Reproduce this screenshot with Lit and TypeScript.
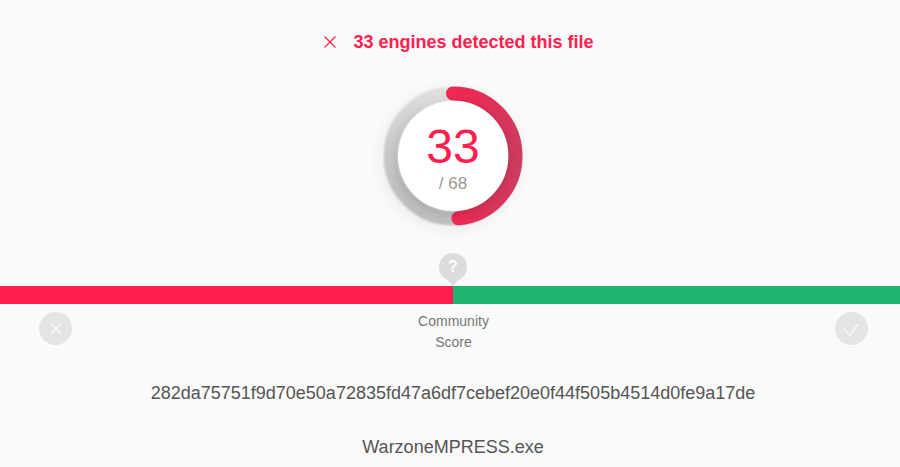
import { LitElement, html, css } from 'lit';
import { customElement, property } from 'lit/decorators.js';

const RADIUS = 62.5;
const CIRCUMFERENCE = 2 * Math.PI * RADIUS;

@customElement('app-root')
export class AppRoot extends LitElement {
	@property({ type: Number }) positives = 33;
	@property({ type: Number }) total = 68;

	static styles = css`
		:host {
			display: block;
			height: 467px;
			overflow: hidden;
			background: #fafafa;
			font-family: "Liberation Sans", Arial, sans-serif;
		}
		.page {
			display: flex;
			flex-direction: column;
			align-items: center;
			padding: 31px 0 0 6px;
		}
		.headline {
			display: flex;
			align-items: center;
			gap: 16px;
			height: 22px;
			margin-left: 11px;
			color: #ff2050;
			font-size: 18px;
			font-weight: 700;
		}
		.headline svg {
			display: block;
		}
		.gauge {
			position: relative;
			width: 140px;
			height: 140px;
			margin-top: 33px;
			border-radius: 50%;
			box-shadow: -2px 3px 16px rgba(0, 0, 0, 0.06);
		}
		.gauge svg {
			display: block;
		}
		.gauge-face {
			position: absolute;
			left: 15px;
			top: 15px;
			width: 110px;
			height: 110px;
			border-radius: 50%;
			background: #fff;
			box-shadow: -1px 2px 8px rgba(0, 0, 0, 0.2);
			display: flex;
			flex-direction: column;
			align-items: center;
		}
		.positives {
			margin-top: 18px;
			color: #ff2050;
			font-size: 48px;
			line-height: 55px;
		}
		.total {
			color: #9a9a9a;
			font-size: 17px;
			line-height: 20px;
		}
		.score {
			position: relative;
			align-self: stretch;
			margin: 60px 0 0 -6px;
		}
		.bar {
			display: grid;
			grid-template-columns: 453px 1fr;
			height: 18px;
		}
		.bar-bad {
			background: #ff2050;
		}
		.bar-good {
			background: #21b56f;
		}
		.pin {
			position: absolute;
			left: 439px;
			top: -33px;
		}
		.pin span {
			position: absolute;
			left: 0;
			top: 0;
			width: 28px;
			height: 28px;
			line-height: 28px;
			text-align: center;
			color: #fff;
			font-size: 16px;
			font-weight: 700;
		}
		.votes {
			display: flex;
			justify-content: space-between;
			align-items: flex-start;
			padding: 7px 32px 0 39px;
		}
		.vote {
			width: 33px;
			height: 33px;
			margin-top: 1px;
			border-radius: 50%;
			background: #e4e4e4;
			display: flex;
			align-items: center;
			justify-content: center;
		}
		.community {
			color: #767676;
			font-size: 14px;
			line-height: 21px;
			text-align: center;
		}
		.hash {
			margin-top: 28px;
			color: #555;
			font-size: 18px;
			line-height: 24px;
		}
		.filename {
			margin-top: 30px;
			color: #555;
			font-size: 18px;
			line-height: 24px;
		}
	`;

	render() {
		const filled = (this.positives / this.total) * CIRCUMFERENCE;
		return html`
			<div class="page">
				<div class="headline">
					<svg width="14" height="14" viewBox="0 0 14 14" fill="none" stroke="#ff2050" stroke-width="1.2">
						<path d="M1.5 1.5l11 11M12.5 1.5l-11 11" />
					</svg>
					<span>${this.positives} engines detected this file</span>
				</div>

				<div class="gauge">
					<svg width="140" height="140" viewBox="0 0 140 140" fill="none">
						<defs>
							<linearGradient id="track" x1="0.75" y1="0" x2="0.25" y2="1">
								<stop offset="0" stop-color="#e4e4e4" />
								<stop offset="1" stop-color="#bcbcbc" />
							</linearGradient>
							<linearGradient id="arc" gradientUnits="userSpaceOnUse" x1="70" y1="5" x2="60" y2="135">
								<stop offset="0" stop-color="#ff2050" />
								<stop offset="0.6" stop-color="#ea2a54" />
								<stop offset="1" stop-color="#cc3c5e" />
							</linearGradient>
							<filter id="soft" x="-10%" y="-10%" width="120%" height="120%">
								<feGaussianBlur stdDeviation="1" />
							</filter>
						</defs>
						<circle cx="70" cy="70" r="${RADIUS}" stroke="url(#track)" stroke-width="14" filter="url(#soft)" />
						<circle
							cx="70"
							cy="70"
							r="${RADIUS}"
							stroke="url(#arc)"
							stroke-width="14"
							stroke-linecap="round"
							stroke-dasharray="${filled} ${CIRCUMFERENCE}"
							transform="rotate(-90 70 70)"
						/>
					</svg>
					<div class="gauge-face">
						<div class="positives">${this.positives}</div>
						<div class="total">/ ${this.total}</div>
					</div>
				</div>

				<div class="score">
					<div class="bar">
						<div class="bar-bad"></div>
						<div class="bar-good"></div>
					</div>
					<div class="pin">
						<svg width="28" height="33" viewBox="0 0 28 33">
							<path fill="#dcdcdc" d="M14 0a14 14 0 0 1 5 27.1L14 33l-5-5.9A14 14 0 0 1 14 0z" />
						</svg>
						<span>?</span>
					</div>
					<div class="votes">
						<div class="vote">
							<svg width="16" height="16" viewBox="0 0 16 16" fill="none" stroke="#fbfbfb" stroke-width="1.2">
								<path d="M2.5 2.5l11 11M13.5 2.5l-11 11" />
							</svg>
						</div>
						<div class="community">Community<br />Score</div>
						<div class="vote">
							<svg width="18" height="16" viewBox="0 0 18 16" fill="none" stroke="#fbfbfb" stroke-width="1.2">
								<path d="M2 7.7l6 6.6L16.3 2.7" />
							</svg>
						</div>
					</div>
				</div>

				<div class="hash">282da75751f9d70e50a72835fd47a6df7cebef20e0f44f505b4514d0fe9a17de</div>
				<div class="filename">WarzoneMPRESS.exe</div>
			</div>
		`;
	}
}
